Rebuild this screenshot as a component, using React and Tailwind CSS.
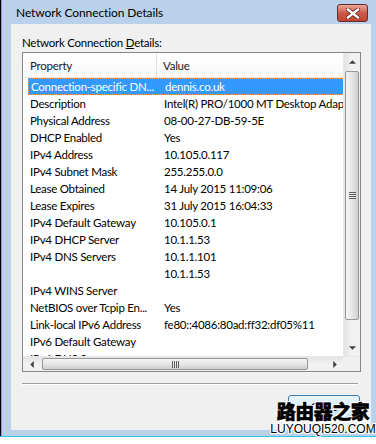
import React from 'react';

const rows = [
  ['Connection-specific DN...', 'dennis.co.uk'],
  ['Description', 'Intel(R) PRO/1000 MT Desktop Adapter'],
  ['Physical Address', '08-00-27-DB-59-5E'],
  ['DHCP Enabled', 'Yes'],
  ['IPv4 Address', '10.105.0.117'],
  ['IPv4 Subnet Mask', '255.255.0.0'],
  ['Lease Obtained', '14 July 2015 11:09:06'],
  ['Lease Expires', '31 July 2015 16:04:33'],
  ['IPv4 Default Gateway', '10.105.0.1'],
  ['IPv4 DHCP Server', '10.1.1.53'],
  ['IPv4 DNS Servers', '10.1.1.101'],
  ['', '10.1.1.53'],
  ['IPv4 WINS Server', ''],
  ['NetBIOS over Tcpip En...', 'Yes'],
  ['Link-local IPv6 Address', 'fe80::4086:80ad:ff32:df05%11'],
  ['IPv6 Default Gateway', ''],
  ['IPv6 DNS Servers', ''],
];

const Arrow = ({ dir }) => {
  const pts = {
    up: '0,4 4,0 8,4',
    down: '0,0 4,4 8,0',
    left: '4,0 0,4 4,8',
    right: '0,0 4,4 0,8',
  }[dir];
  const vertical = dir === 'up' || dir === 'down';
  return (
    <svg width={vertical ? 7 : 4} height={vertical ? 4 : 7} viewBox={vertical ? '0 0 8 4' : '0 0 4 8'}>
      <polygon points={pts} fill="#404040" />
    </svg>
  );
};

const ListRow = ({ prop, value, selected }) => (
  <div className="flex h-[17px] w-[420px] items-center pl-[5px]">
    <div
      className={`flex h-[17px] w-[415px] items-center ${
        selected ? 'border border-dotted border-[#f4a460] bg-[#3399ff] text-white' : 'text-black'
      }`}
    >
      <div className="w-[129px] shrink-0 overflow-hidden pl-[2px] whitespace-nowrap">{prop}</div>
      <div className="pl-[7px] whitespace-nowrap">{value}</div>
    </div>
  </div>
);

const VScroll = () => (
  <div className="flex w-[17px] flex-col border-l border-[#e8e8e8] bg-gradient-to-r from-[#e3e3e3] via-[#f2f2f2] to-[#f0f0f0]">
    <div className="flex h-[17px] items-center justify-center">
      <Arrow dir="up" />
    </div>
    <div className="mx-[1px] mt-[1px] flex h-[249px] items-center justify-center rounded-[2px] border border-[#979797] bg-gradient-to-r from-[#f4f4f4] via-[#e6e6e6] to-[#cfcfcf]">
      <div className="flex flex-col gap-[1px]">
        <div className="h-px w-[7px] bg-[#5f5f5f]" />
        <div className="h-px w-[7px] bg-[#5f5f5f]" />
        <div className="h-px w-[7px] bg-[#5f5f5f]" />
        <div className="h-px w-[7px] bg-[#5f5f5f]" />
      </div>
    </div>
    <div className="flex-1" />
    <div className="flex h-[17px] items-center justify-center">
      <Arrow dir="down" />
    </div>
  </div>
);

const HScroll = () => (
  <div className="flex h-[15px] border-t border-[#e8e8e8] bg-gradient-to-b from-[#e3e3e3] via-[#f2f2f2] to-[#f0f0f0]">
    <div className="flex w-[17px] items-center justify-center">
      <Arrow dir="left" />
    </div>
    <div className="my-[1px] ml-[2px] flex w-[266px] items-center justify-center rounded-[2px] border border-[#979797] bg-gradient-to-b from-[#f4f4f4] via-[#e6e6e6] to-[#cfcfcf]">
      <div className="flex gap-[1px]">
        <div className="h-[7px] w-px bg-[#5f5f5f]" />
        <div className="h-[7px] w-px bg-[#5f5f5f]" />
        <div className="h-[7px] w-px bg-[#5f5f5f]" />
        <div className="h-[7px] w-px bg-[#5f5f5f]" />
      </div>
    </div>
    <div className="flex-1" />
    <div className="flex w-[17px] items-center justify-center">
      <Arrow dir="right" />
    </div>
    <div className="w-[17px] bg-[#f0f0f0]" />
  </div>
);

const ListView = () => (
  <div className="ml-[11px] flex h-[320px] w-[339px] flex-col border border-[#828790] bg-white">
    <div className="flex h-[303px]">
      <div className="w-[320px] overflow-hidden">
        {/* Header */}
        <div className="flex h-[25px] w-[420px] items-center border-b border-[#e5e5e5] bg-gradient-to-b from-white to-[#f7f8fa] text-[#1a1a1a]">
          <div className="flex h-full w-[134px] items-center border-r border-[#e2e3e5] pl-[7px]">Property</div>
          <div className="pl-[6px]">Value</div>
        </div>
        {rows.map(([p, v], i) => (
          <ListRow key={i} prop={p} value={v} selected={i === 0} />
        ))}
      </div>
      <VScroll />
    </div>
    <HScroll />
  </div>
);

export default function App() {
  return (
    <div className="relative h-[444px] w-[376px] overflow-hidden bg-white font-['Lato',sans-serif] text-[11.5px] leading-[15px] tracking-[-0.25px]">
      <div className="flex h-[437px] border-b border-[#2ec4e6]">
        <div className="w-px bg-black" />
        <div className="w-px bg-[#2ec4e6]" />
        <div className="flex flex-1 flex-col bg-[#b9d1ea]">
          {/* Title bar */}
          <div className="flex h-[24px] items-start">
            <div className="pl-[14px] pt-[5px] text-[12px] leading-[16px] tracking-[-0.1px] text-black">Network Connection Details</div>
            <div className="mt-[4px] mr-[8px] ml-auto flex h-[18px] w-[31px] items-center justify-center rounded-[3px] border border-[#6b2a2a] bg-gradient-to-b from-[#e9a89c] via-[#cb5a48] to-[#c0452f]">
              <svg width="14" height="11" viewBox="0 0 14 11">
                <path d="M2 1.5 L12 9.5 M12 1.5 L2 9.5" stroke="#5a2020" strokeWidth="4" strokeLinecap="square" />
                <path d="M2 1.5 L12 9.5 M12 1.5 L2 9.5" stroke="#ffffff" strokeWidth="2.4" strokeLinecap="square" />
              </svg>
            </div>
          </div>
          {/* Client area */}
          <div className="ml-[9px] flex h-[406px] w-[360px] flex-col bg-[#f0f0f0]">
            <div className="pt-[11px] pb-[2px] pl-[11px] text-black">
              Network Connection <span className="underline">D</span>etails:
            </div>
            <ListView />
            <div className="mt-[11px] ml-[11px] h-[2px] w-[336px] border-t border-b border-t-[#a0a0a0] border-b-white" />
            <div className="mt-[10px] ml-[277px] flex h-[23px] w-[72px] items-center justify-center rounded-[3px] border border-[#3c7fb1] bg-gradient-to-b from-[#eaf6fd] to-[#bee6fd] text-black">
              Close
            </div>
          </div>
        </div>
      </div>
      {/* Watermark */}
      <div className="absolute top-[401px] left-[275px] flex w-[96px] flex-col items-center leading-none tracking-normal">
        <div className="font-['Noto_Sans_CJK_SC',sans-serif] text-[19px] font-black tracking-[-0.5px] text-black [-webkit-text-stroke:0.5px_black] [text-shadow:1.5px_1.5px_0_white,-1.5px_-1.5px_0_white,1.5px_-1.5px_0_white,-1.5px_1.5px_0_white,0_1.5px_0_white,0_-1.5px_0_white]">
          路由器之家
        </div>
        <div className="mt-[3px] font-['Liberation_Sans',sans-serif] text-[12px] text-black [text-shadow:1px_1px_0_white,-1px_-1px_0_white,1px_-1px_0_white,-1px_1px_0_white]">
          LUYOUQI520.COM
        </div>
      </div>
    </div>
  );
}
